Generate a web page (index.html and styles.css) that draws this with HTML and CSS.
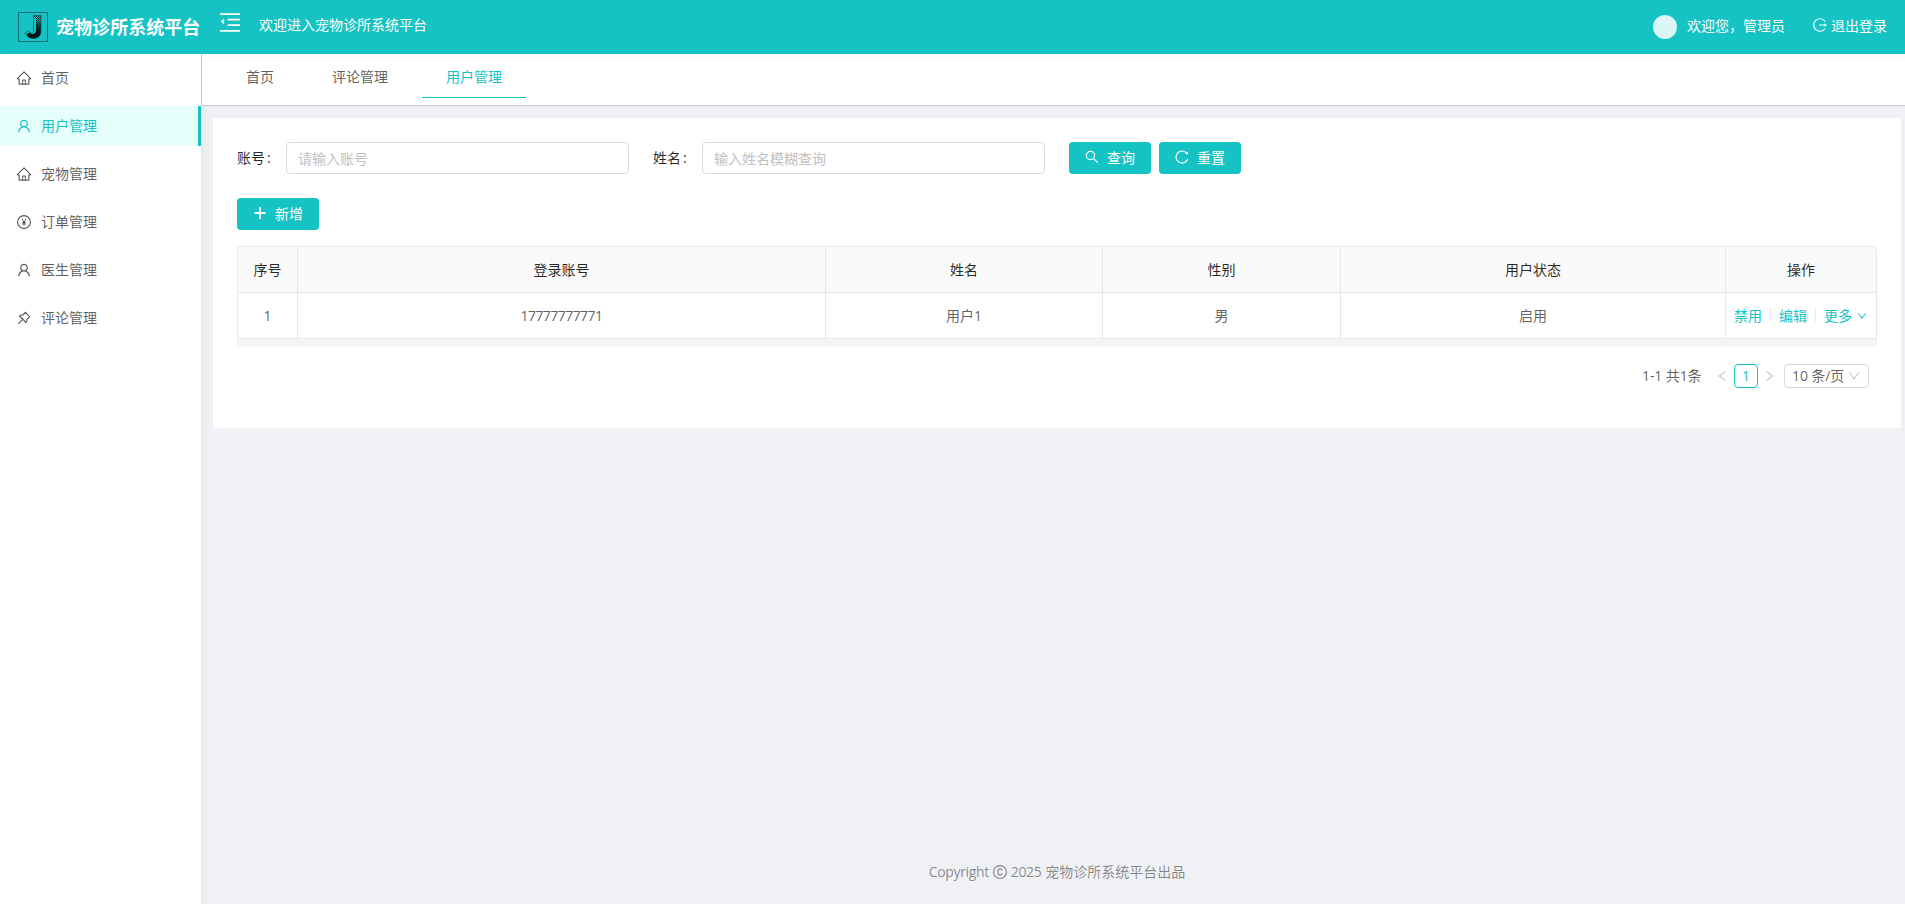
FILE: index.html
```html
<!DOCTYPE html>
<html lang="zh-CN">
<head>
<meta charset="utf-8">
<title>宠物诊所系统平台</title>
<link rel="stylesheet" href="styles.css">
</head>
<body>
<svg class="defs" aria-hidden="true">
  <symbol id="home" viewBox="64 64 896 896"><path fill="currentColor" d="M946.5 505L560.1 118.8l-25.9-25.9a31.5 31.5 0 0 0-44.4 0L77.5 505a63.9 63.9 0 0 0-18.8 46c.4 35.2 29.7 63.3 64.9 63.3h42.5V940h691.8V614.3h43.4c17.1 0 33.2-6.7 45.3-18.8a63.6 63.6 0 0 0 18.7-45.3c0-17-6.7-33.1-18.8-45.2zM568 868H456V664h112v204zm217.9-325.7V868H632V640c0-22.1-17.9-40-40-40H432c-22.1 0-40 17.9-40 40v228H238.1V542.3h-96l370-369.7 23.1 23.1L882 542.3h-96.1z"/></symbol>
  <symbol id="user" viewBox="64 64 896 896"><path fill="currentColor" d="M858.5 763.6a374 374 0 0 0-80.6-119.5 375.63 375.63 0 0 0-119.5-80.6c-.4-.2-.8-.3-1.2-.5C719.5 518 760 444.7 760 362c0-137-111-248-248-248S264 225 264 362c0 82.7 40.5 156 102.8 201.1-.4.2-.8.3-1.2.5-44.8 18.9-85 46-119.5 80.6a375.63 375.63 0 0 0-80.6 119.5A371.7 371.7 0 0 0 136 901.8a8 8 0 0 0 8 8.2h60c4.4 0 7.9-3.5 8-7.8 2-77.2 33-149.5 87.8-204.3 56.7-56.7 132-87.9 212.2-87.9s155.5 31.2 212.2 87.9C779 752.7 810 825 812 902.2c.1 4.4 3.6 7.8 8 7.8h60a8 8 0 0 0 8-8.2c-1-47.8-10.9-94.3-29.5-138.2zM512 534c-45.9 0-89.1-17.9-121.6-50.4S340 407.9 340 362c0-45.9 17.9-89.1 50.4-121.6S466.1 190 512 190s89.1 17.9 121.6 50.4S684 316.1 684 362c0 45.9-17.9 89.1-50.4 121.6S557.9 534 512 534z"/></symbol>
  <symbol id="yuan" viewBox="64 64 896 896"><g fill="none" stroke="currentColor" stroke-width="72"><circle cx="512" cy="512" r="410"/><path stroke-width="60" d="M380 300l132 232 132-232M512 520v222M400 550h224M400 640h224"/></g></symbol>
  <symbol id="pin" viewBox="64 64 896 896"><path fill="none" stroke="currentColor" stroke-width="72" d="M600 148L876 424 700 600C712 680 690 754 640 800L224 384C270 334 344 312 424 324ZM410 614L150 874"/></symbol>
  <symbol id="fold" viewBox="64 64 896 896"><path fill="currentColor" d="M64 118h896v76H64zM64 868h896v76H64zM408 366h552v76H408zM408 618h552v76H408zM90 492L249 367v250z"/></symbol>
  <symbol id="search" viewBox="64 64 896 896"><path fill="none" stroke="currentColor" stroke-width="76" d="M674 412a262 262 0 1 1-524 0a262 262 0 1 1 524 0M600 600L882 882"/></symbol>
  <symbol id="reload" viewBox="64 64 896 896"><path fill="none" stroke="currentColor" stroke-width="72" d="M812 270A385 385 0 1 0 870 660"/><path fill="currentColor" d="M896 156L706 306 908 356z"/></symbol>
  <symbol id="logout" viewBox="64 64 896 896"><path fill="none" stroke="currentColor" stroke-width="72" d="M838 290A400 400 0 1 0 838 734"/><path fill="currentColor" d="M460 476h352v-76l144 112-144 112v-76H460z"/></symbol>
  <symbol id="plus" viewBox="0 0 14 14"><path fill="currentColor" d="M6 1h2v5h4.500v2H8v5H6V8H1.500V6H6z"/></symbol>
  <symbol id="copy" viewBox="64 64 896 896"><g fill="none" stroke="currentColor" stroke-width="72"><circle cx="512" cy="512" r="412"/><path d="M644 426C630 350 580 312 512 312C420 312 372 386 372 512S420 712 512 712C580 712 634 674 644 604"/></g></symbol>
  <symbol id="down" viewBox="64 64 896 896"><path fill="currentColor" d="M884 256h-75c-5.1 0-9.900 2.500-12.900 6.600L512 654.200 227.900 262.600c-3-4.100-7.800-6.600-12.900-6.600h-75c-6.500 0-10.300 7.400-6.500 12.700l352.600 486.100c12.800 17.600 39 17.600 51.700 0l352.600-486.100c3.900-5.300.1-12.700-6.400-12.700z"/></symbol>
</svg>
<header class="header">
  <svg class="logo" viewBox="0 0 30 30">
    <defs>
      <pattern id="hatch" width="2" height="2" patternUnits="userSpaceOnUse"><path d="M0 0h1v1H0zM1 1h1v1H1z" fill="#04181a"/></pattern>
      <linearGradient id="ink" x1="0" y1="0" x2="0" y2="1"><stop offset="0" stop-color="#04181a" stop-opacity="0"/><stop offset=".55" stop-color="#04181a"/></linearGradient>
    </defs>
    <rect x=".5" y=".5" width="29" height="29" fill="none" stroke="#0b6f73"/>
    <path d="M15.500 3.500h7.500V16h-5V6h-2.500z" fill="url(#hatch)"/>
    <path d="M18 7h5v12C23 24.500 19.500 26.500 15.500 26.500C12 26.500 9.500 25 8.500 22L11.500 20.500C13.500 23 18 22.500 18 18z" fill="url(#ink)"/>
    <path d="M15.500 3.500H23V19C23 24.500 19.500 26.500 15.500 26.500C11 26.500 8 24 7.500 20.500L10 19C11.500 22 15.500 22 15.500 18z" fill="none" stroke="#075457" stroke-width=".8"/>
  </svg>
  <h1 class="brand">宠物诊所系统平台</h1>
  <svg class="fold"><use href="#fold"/></svg>
  <span class="welcome">欢迎进入宠物诊所系统平台</span>
  <span class="avatar"></span>
  <span class="greeting">欢迎您，管理员</span>
  <a class="logout"><svg class="icon"><use href="#logout"/></svg>退出登录</a>
</header>
<div class="layout">
  <nav class="sidebar">
    <a class="item"><svg class="icon"><use href="#home"/></svg>首页</a>
    <a class="item active"><svg class="icon"><use href="#user"/></svg>用户管理</a>
    <a class="item"><svg class="icon"><use href="#home"/></svg>宠物管理</a>
    <a class="item"><svg class="icon"><use href="#yuan"/></svg>订单管理</a>
    <a class="item"><svg class="icon"><use href="#user"/></svg>医生管理</a>
    <a class="item"><svg class="icon"><use href="#pin"/></svg>评论管理</a>
  </nav>
  <div class="main">
    <div class="tabs">
      <a class="tab">首页</a><a class="tab">评论管理</a><a class="tab current">用户管理</a>
    </div>
    <section class="card">
      <form class="search">
        <label>账号<b>:</b></label><input class="field" placeholder="请输入账号">
        <label>姓名<b>:</b></label><input class="field" placeholder="输入姓名模糊查询">
        <button type="button" class="btn query"><svg class="icon"><use href="#search"/></svg>查询</button>
        <button type="button" class="btn"><svg class="icon"><use href="#reload"/></svg>重置</button>
      </form>
      <button type="button" class="btn add"><svg class="icon"><use href="#plus"/></svg>新增</button>
      <div class="table">
        <div class="row head"><span>序号</span><span>登录账号</span><span>姓名</span><span>性别</span><span>用户状态</span><span>操作</span></div>
        <div class="row"><span>1</span><span class="num">17777777771</span><span>用户1</span><span>男</span><span>启用</span>
          <span class="actions"><a>禁用</a><i></i><a>编辑</a><i></i><a>更多</a><svg class="more"><use href="#down"/></svg></span></div>
      </div>
      <div class="scroll"></div>
      <div class="pager">
        <span class="total">1-1 共1条</span>
        <svg class="arrow prev"><use href="#down"/></svg>
        <span class="page">1</span>
        <svg class="arrow next"><use href="#down"/></svg>
        <span class="size">10 条/页<svg><use href="#down"/></svg></span>
      </div>
    </section>
    <footer class="footer"><span class="word">Copyright</span><svg class="icon"><use href="#copy"/></svg><span class="year">2025</span>宠物诊所系统平台出品</footer>
  </div>
</div>
</body>
</html>
```

FILE: styles.css
```css
* { box-sizing: border-box; }
body {
  margin: 0;
  height: 904px;
  overflow: hidden;
  display: flex;
  flex-direction: column;
  font: 14px/22px "Open Sans", "Noto Sans CJK SC", sans-serif;
  color: rgba(0, 0, 0, .65);
  background: #f0f1f5;
}
.defs { position: absolute; width: 0; height: 0; }
.icon { width: 14px; height: 14px; flex: none; }

.header {
  height: 54px;
  flex: none;
  display: flex;
  align-items: center;
  padding: 0 18px;
  color: #fff;
  background: #15c3c5;
}
.logo { width: 30px; height: 30px; }
.brand { margin: 0 0 0 8px; font-size: 18px; font-weight: 700; line-height: 26px; letter-spacing: .05px; }
.fold { width: 20px; height: 20px; margin: -10px 19px 0 19.6px; }
.welcome { margin-top: -4px; }
.avatar { width: 24px; height: 24px; margin: 0 10px 0 auto; border-radius: 50%; background: #dcf6f6; }
.greeting { margin-top: -2px; }
.logout { display: flex; align-items: center; gap: 4px; margin: -2px 0 0 28px; }
.logout .icon { margin-top: -2px; }

.layout { flex: 1; display: flex; min-height: 0; }
.sidebar {
  width: 201px;
  flex: none;
  display: flex;
  flex-direction: column;
  gap: 8px;
  padding-top: 4px;
  background: #fff;
  box-shadow: 2px 0 8px rgba(29, 35, 41, .05);
  z-index: 1;
}
.item { height: 40px; display: flex; align-items: center; gap: 10px; padding: 0 0 0 17px; }
.active { color: #15c3c5; background: #e6fffb; border-right: 3px solid #15c3c5; }

.main { flex: 1; display: flex; flex-direction: column; background: #f0f1f5; }
.tabs {
  height: 52px;
  flex: none;
  display: flex;
  position: relative;
  z-index: 2;
  padding-left: 20px;
  background: linear-gradient(#f8f8f8, #fff 5px);
  border-left: 1px solid #c9c9c9;
  border-bottom: 1px solid #c9c9c9;
}
.tab { height: 44px; padding: 12px 24px 0; margin-right: 10px; }
.current { color: #15c3c5; border-bottom: 1px solid #15c3c5; }

.card { height: 310px; flex: none; margin: 12px 4px 0 12px; padding: 24px; border-radius: 2px; background: #fff; }
.search { display: flex; align-items: center; color: rgba(0, 0, 0, .85); }
.search label { width: 49px; white-space: nowrap; }
.search b { margin-left: 2px; font-weight: 400; }
.field {
  width: 343px;
  height: 32px;
  padding: 1px 11px 0;
  margin-right: 24px;
  font: inherit;
  border: 1px solid #d9d9d9;
  border-radius: 4px;
}
.field::placeholder { color: #bfbfbf; }
.btn {
  width: 82px;
  height: 32px;
  display: flex;
  align-items: center;
  gap: 8px;
  padding: 0 16px;
  font: inherit;
  color: #fff;
  border: 0;
  border-radius: 4px;
  background: #15c3c5;
}
.btn .icon { margin-top: -2px; }
.query { margin-right: 8px; }
.add { margin: 24px 0 16px; }

.table { border: 1px solid #e8e8e8; border-right: 0; border-bottom: 0; border-radius: 4px 4px 0 0; overflow: hidden; }
.row { display: grid; grid-template-columns: 60px 528px 277px 238px 385px 151px; height: 46px; }
.row > span {
  display: flex;
  align-items: center;
  justify-content: center;
  border-right: 1px solid #e8e8e8;
  border-bottom: 1px solid #e8e8e8;
}
.head { color: rgba(0, 0, 0, .85); background: #fafafa; }
.head > span:last-child { border-top-right-radius: 4px; }
.num { letter-spacing: -.55px; }
.row .actions { color: #15c3c5; justify-content: flex-start; padding-left: 8px; }
.actions i { width: 1px; height: 13px; margin: 0 8px; background: #e8e8e8; }
.more { width: 10px; height: 10px; margin-left: 5px; }
.scroll { height: 8px; background: #f5f5f5; border-radius: 0 0 2px 2px; }

.pager { display: flex; align-items: center; height: 24px; margin: 17px 8px 0 0; justify-content: flex-end; }
.total { width: 60px; white-space: nowrap; letter-spacing: -.1px; }
.arrow { width: 12px; height: 12px; color: #bfbfbf; }
.prev { transform: rotate(90deg); margin: 0 6px 0 14px; }
.next { transform: rotate(-90deg); margin: 0 8px 0 6px; }
.page { width: 24px; height: 24px; text-align: center; color: #15c3c5; border: 1px solid #15c3c5; border-radius: 4px; }
.size {
  width: 85px;
  height: 24px;
  display: flex;
  align-items: center;
  justify-content: space-between;
  padding: 0 8px 0 7px;
  white-space: nowrap;
  letter-spacing: -.1px;
  border: 1px solid #d9d9d9;
  border-radius: 4px;
}
.size svg { width: 12px; height: 12px; color: #bfbfbf; }

.footer { display: flex; justify-content: center; align-items: center; margin: auto 4px 21px 12px; color: rgba(0, 0, 0, .45); }
.word { letter-spacing: -.35px; }
.footer .icon { margin: 0 4px; }
.year { letter-spacing: -.4px; margin-right: 4px; }
```
